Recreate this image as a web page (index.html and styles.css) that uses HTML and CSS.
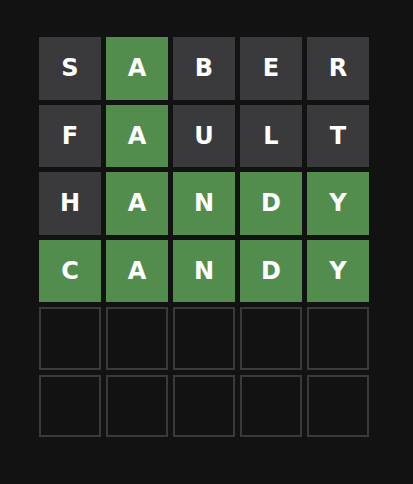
FILE: index.html
```html
<!DOCTYPE html>
<html>
<head>
<meta charset="utf-8">
<link rel="stylesheet" href="styles.css">
</head>
<body>
<div class="board">
  <div class="tile absent">S</div><div class="tile correct">A</div><div class="tile absent">B</div><div class="tile absent">E</div><div class="tile absent">R</div>
  <div class="tile absent">F</div><div class="tile correct">A</div><div class="tile absent">U</div><div class="tile absent">L</div><div class="tile absent">T</div>
  <div class="tile absent">H</div><div class="tile correct">A</div><div class="tile correct">N</div><div class="tile correct">D</div><div class="tile correct">Y</div>
  <div class="tile correct">C</div><div class="tile correct">A</div><div class="tile correct">N</div><div class="tile correct">D</div><div class="tile correct">Y</div>
  <div class="tile empty"></div><div class="tile empty"></div><div class="tile empty"></div><div class="tile empty"></div><div class="tile empty"></div>
  <div class="tile empty"></div><div class="tile empty"></div><div class="tile empty"></div><div class="tile empty"></div><div class="tile empty"></div>
</div>
</body>
</html>
```
FILE: styles.css
```css
html, body {
  margin: 0;
  padding: 0;
  background: #121213;
  height: 100%;
}
body {
  padding: 37px 0 0 39px;
  box-sizing: border-box;
}
.board {
  width: 330px;
  height: 400px;
  display: grid;
  grid-template-columns: repeat(5, 1fr);
  grid-template-rows: repeat(6, 1fr);
  gap: 5px;
}
.tile {
  display: flex;
  align-items: center;
  justify-content: center;
  font-family: "DejaVu Sans", sans-serif;
  font-weight: bold;
  font-size: 24px;
  color: #ffffff;
  box-sizing: border-box;
}
.absent { background: #3a3a3c; }
.correct { background: #538d4e; }
.empty { border: 2px solid #3a3a3c; }
```
